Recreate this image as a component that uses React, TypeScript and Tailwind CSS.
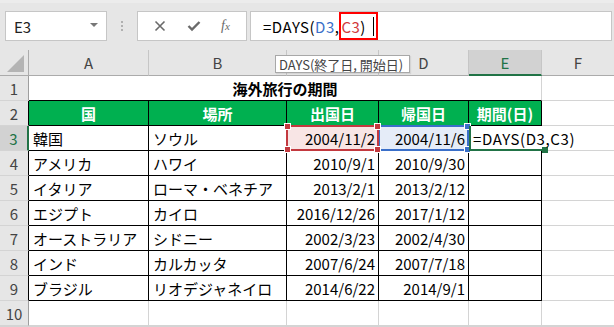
import React from 'react';

const rows: string[][] = [
  ['韓国', 'ソウル', '2004/11/2', '2004/11/6'],
  ['アメリカ', 'ハワイ', '2010/9/1', '2010/9/30'],
  ['イタリア', 'ローマ・ベネチア', '2013/2/1', '2013/2/12'],
  ['エジプト', 'カイロ', '2016/12/26', '2017/1/12'],
  ['オーストラリア', 'シドニー', '2002/3/23', '2002/4/30'],
  ['インド', 'カルカッタ', '2007/6/24', '2007/7/18'],
  ['ブラジル', 'リオデジャネイロ', '2014/6/22', '2014/9/1'],
];

const headers = ['国', '場所', '出国日', '帰国日', '期間(日)'];

const RowHead: React.FC<{ n: number; active?: boolean; table?: boolean }> = ({ n, active, table }) => {
  let cls = 'flex items-center justify-center text-[15px] leading-none border-b border-b-[#d4d4d4] ';
  if (active) cls += 'bg-[#d2d2d2] text-[#217346] border-r-2 border-r-[#217346]';
  else if (table) cls += 'bg-[#e6e6e6] text-[#444] border-r border-r-black';
  else cls += 'bg-[#e6e6e6] text-[#444] border-r border-r-[#9e9e9e]';
  return <div className={cls}>{n}</div>;
};

const Handle: React.FC<{ pos: string; color: string }> = ({ pos, color }) => (
  <span className={`absolute w-[7px] h-[7px] border border-white ${pos} ${color}`} />
);

export default function App() {
  return (
    <div className="w-[614px] h-[327px] overflow-hidden bg-[#d4d4d4] font-['Noto_Sans_CJK_JP','Noto_Sans',sans-serif] text-black">
      {/* formula bar */}
      <div className="h-[50px] bg-[#e6e6e6] border-t-[3px] border-[#ececec] flex items-start pt-[8px] pl-[5px] pr-[2px]">
        <div className="w-[102px] h-[30px] bg-white border border-[#c6c6c6] flex items-center justify-between pl-[8px] pr-[8px]">
          <span className="text-[15px] leading-none text-[#222]">E3</span>
          <span className="w-0 h-0 border-l-[4px] border-r-[4px] border-t-[4px] border-l-transparent border-r-transparent border-t-[#777] mb-[3px]" />
        </div>
        <div className="w-[30px] h-[30px] flex flex-col items-center justify-center gap-[2px]">
          <span className="w-[2px] h-[2px] bg-[#b0b0b0]" />
          <span className="w-[2px] h-[2px] bg-[#b0b0b0]" />
          <span className="w-[2px] h-[2px] bg-[#b0b0b0]" />
        </div>
        <div className="w-[110px] h-[30px] bg-white border border-[#c6c6c6] flex items-center justify-around px-[6px]">
          <svg width="12" height="12" viewBox="0 0 12 12">
            <path d="M1.5 1.5 L10.5 10.5 M10.5 1.5 L1.5 10.5" stroke="#6a6a6a" strokeWidth="1.6" fill="none" />
          </svg>
          <svg width="14" height="12" viewBox="0 0 14 12">
            <path d="M1.5 6 L5 9.5 L12.5 2" stroke="#6a6a6a" strokeWidth="2.4" fill="none" />
          </svg>
          <span className="font-['Liberation_Serif',serif] italic text-[14px] leading-none text-[#6a6a6a]">
            f<span className="text-[11px]">x</span>
          </span>
        </div>
        <div className="ml-[3px] flex-1 h-[30px] bg-white border border-[#c6c6c6] flex items-stretch pl-[12px] text-[15px] leading-none tracking-[0.5px]">
          <span className="flex items-center">=DAYS(</span>
          <span className="flex items-center text-[#3a6fc9]">D3</span>
          <span className="flex items-center">,</span>
          <span className="flex items-center border-2 border-[#ff0000] pr-[2px]">
            <span className="text-[#d23a3a]">C3</span>
            <span>)</span>
            <span className="ml-[7px] w-px h-[19px] bg-black" />
          </span>
        </div>
      </div>

      {/* sheet */}
      <div className="relative grid grid-cols-[29px_120px_138px_92px_90px_73px_72px] grid-rows-[26px_repeat(10,25px)] bg-white text-[15px] leading-none">
        {/* column headers */}
        <div className="flex items-end justify-end pr-[4px] pb-[3px] bg-[#e6e6e6] border-r border-b border-[#ababab]">
          <svg width="17" height="17" viewBox="0 0 17 17">
            <polygon points="17,0 17,17 0,17" fill="#b4b4b4" />
          </svg>
        </div>
        {['A', 'B', ''].map((c, i) => (
          <div key={i} className="flex items-center justify-center bg-[#e6e6e6] text-[#444] border-r border-r-[#c6c6c6] border-b border-b-[#ababab]">
            {c}
          </div>
        ))}
        <div className="flex items-center justify-center bg-[#e6e6e6] text-[#444] border-r border-r-[#c6c6c6] border-b border-b-[#ababab]">D</div>
        <div className="flex items-center justify-center bg-[#d2d2d2] text-[#217346] border-r border-r-[#c6c6c6] border-b-2 border-b-[#217346]">E</div>
        <div className="flex items-center justify-center bg-[#e6e6e6] text-[#444] border-b border-b-[#ababab]">F</div>

        {/* row 1 */}
        <RowHead n={1} />
        <div className="col-span-5 flex items-center justify-center font-bold border-b border-b-black border-r border-r-[#d4d4d4]">
          海外旅行の期間
        </div>
        <div className="border-b border-[#d4d4d4]" />

        {/* row 2 */}
        <RowHead n={2} table />
        {headers.map((h) => (
          <div key={h} className="flex items-center justify-center bg-[#00b050] text-white font-bold border-r border-b border-black">
            {h}
          </div>
        ))}
        <div className="border-b border-[#d4d4d4]" />

        {/* data rows */}
        {rows.map((r, i) => {
          const first = i === 0;
          return (
            <React.Fragment key={r[0]}>
              <RowHead n={i + 3} active={first} table />
              <div className="flex items-center pl-[4px] border-r border-b border-black whitespace-nowrap">{r[0]}</div>
              <div className="flex items-center pl-[4px] border-r border-b border-black whitespace-nowrap">{r[1]}</div>
              {first ? (
                <div className="relative flex items-center justify-end pr-[3px] bg-[#f8e5e5] border-r border-b border-black">
                  {r[2]}
                  <div className="absolute -left-px -top-px -right-px -bottom-px border-2 border-[#c3393f] z-20">
                    <Handle pos="-left-[4px] -top-[4px]" color="bg-[#c3393f]" />
                    <Handle pos="-right-[4px] -top-[4px]" color="bg-[#c3393f]" />
                    <Handle pos="-left-[4px] -bottom-[4px]" color="bg-[#c3393f]" />
                    <Handle pos="-right-[4px] -bottom-[4px]" color="bg-[#c3393f]" />
                  </div>
                </div>
              ) : (
                <div className="flex items-center justify-end pr-[3px] border-r border-b border-black">{r[2]}</div>
              )}
              {first ? (
                <div className="relative flex items-center justify-end pr-[3px] bg-[#e5ecf8] border-r border-b border-black">
                  {r[3]}
                  <div className="absolute -left-px -top-px -right-px -bottom-px border-2 border-[#3a6fc9] z-10">
                    <Handle pos="-right-[4px] -top-[4px]" color="bg-[#3a6fc9]" />
                    <Handle pos="-right-[4px] -bottom-[4px]" color="bg-[#3a6fc9]" />
                  </div>
                </div>
              ) : (
                <div className="flex items-center justify-end pr-[3px] border-r border-b border-black">{r[3]}</div>
              )}
              {first ? (
                <div className="relative flex items-center pl-[4px] border-b border-black z-30">
                  <div className="absolute left-0 top-0 -bottom-px w-[76px] border-l-2 border-b-2 border-[#217346]">
                    <span className="absolute -right-[3px] -bottom-[4px] w-[6px] h-[6px] bg-[#217346]" />
                  </div>
                  <span className="relative whitespace-nowrap tracking-[0.6px]">=DAYS(D3,C3)</span>
                </div>
              ) : (
                <div className="border-r border-b border-black" />
              )}
              <div className="border-b border-[#d4d4d4]" />
            </React.Fragment>
          );
        })}

        {/* row 10 */}
        <RowHead n={10} />
        <div className="border-r border-b border-[#d4d4d4]" />
        <div className="border-r border-b border-[#d4d4d4]" />
        <div className="border-r border-b border-[#d4d4d4]" />
        <div className="border-r border-b border-[#d4d4d4]" />
        <div className="border-r border-b border-[#d4d4d4]" />
        <div className="border-b border-[#d4d4d4]" />

        {/* function tooltip */}
        <div className="absolute left-[275px] top-[5px] h-[18px] w-[135px] px-[3px] flex items-center bg-white border border-[#a8a8a8] text-[13px] text-[#444] whitespace-nowrap shadow-[1px_1px_1px_rgba(0,0,0,0.08)]">
          DAYS(終了日, 開始日)
        </div>
      </div>
    </div>
  );
}
